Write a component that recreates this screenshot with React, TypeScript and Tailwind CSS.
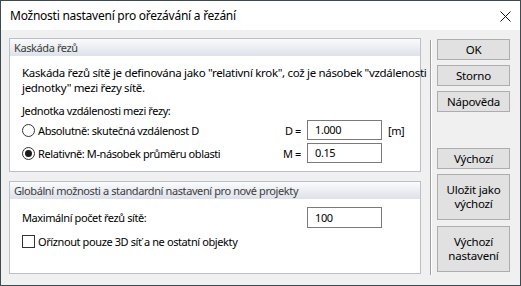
const font = { fontFamily: '"Noto Sans", "DejaVu Sans", sans-serif' };

function GroupBox({ title, className, children }: { title: string; className: string; children: React.ReactNode }) {
  return (
    <div className={`flex flex-col border border-[#b9c0cc] bg-white ${className}`}>
      <div className="h-[17px] bg-gradient-to-b from-[#fbfbfc] to-[#dde1ea] pl-[4px] leading-[17px] text-[#3c3c3c]">
        {title}
      </div>
      {children}
    </div>
  );
}

function Radio({ checked, label }: { checked?: boolean; label: string }) {
  return (
    <div className="flex items-center gap-[3px]">
      <span className="flex h-[13px] w-[13px] items-center justify-center rounded-full border border-[#333333] bg-white">
        {checked && <span className="h-[7px] w-[7px] rounded-full bg-[#1a1a1a]" />}
      </span>
      <span>{label}</span>
    </div>
  );
}

function Field({ value, className = "" }: { value: string; className?: string }) {
  return (
    <div className={`h-[20px] w-[75px] border border-[#7a7a7a] bg-white pl-[7px] leading-[18px] ${className}`}>
      {value}
    </div>
  );
}

function Btn({ children, className = "h-[21px]" }: { children: React.ReactNode; className?: string }) {
  return (
    <div className={`flex w-[73px] items-center justify-center border border-[#adadad] bg-[#e1e1e1] text-center text-[11.5px] leading-[14px] tracking-[-0.2px] text-black ${className}`}>
      {children}
    </div>
  );
}

export default function App() {
  return (
    <div style={font} className="flex h-[286px] w-[521px] flex-col border border-[#3b4a53] bg-[#f0f0f0] text-[11px] tracking-[-0.4px] text-black">
      <div className="flex h-[29px] items-center justify-between bg-white pl-[9px] pr-[9px]">
        <span className="text-[12px] tracking-[-0.25px]">Možnosti nastavení pro ořezávání a řezání</span>
        <svg width="11" height="11" viewBox="0 0 11 11" className="mt-[1px]">
          <path d="M0.5 0.5 L10.5 10.5 M10.5 0.5 L0.5 10.5" stroke="#111" strokeWidth="1" />
        </svg>
      </div>
      <div className="flex flex-1 pl-[8px]">
        <div className="flex flex-col gap-[9px] pt-[8px]">
          <GroupBox title="Kaskáda řezů" className="h-[134px] w-[412px]">
            <div className="flex flex-col pl-[12px] pt-[9px] leading-[15px]">
              <p className="whitespace-nowrap text-[11.5px] tracking-[-0.32px]">
                Kaskáda řezů sítě je definována jako "relativní krok", což je násobek "vzdálenosti
                <br />
                jednotky" mezi řezy sítě.
              </p>
              <p className="mt-[8px]">Jednotka vzdálenosti mezi řezy:</p>
              <div className="mt-[2px] flex h-[20px] items-center">
                <div className="w-[255px]">
                  <Radio label="Absolutně: skutečná vzdálenost D" />
                </div>
                <span className="w-[24px] text-right">D =</span>
                <Field value="1.000" className="ml-[6px]" />
                <span className="ml-[6px]">[m]</span>
              </div>
              <div className="mt-[3px] flex h-[20px] items-center">
                <div className="w-[255px]">
                  <Radio checked label="Relativně: M-násobek průměru oblasti" />
                </div>
                <span className="w-[24px] text-right">M =</span>
                <Field value="0.15" className="ml-[6px]" />
              </div>
            </div>
          </GroupBox>
          <GroupBox title="Globální možnosti a standardní nastavení pro nové projekty" className="h-[93px] w-[412px]">
            <div className="flex flex-col pl-[12px] pt-[8px] leading-[15px]">
              <div className="flex h-[21px] items-center">
                <span className="w-[285px]">Maximální počet řezů sítě:</span>
                <Field value="100" className="h-[21px] leading-[19px]" />
              </div>
              <div className="mt-[6px] flex items-center gap-[3px]">
                <span className="h-[13px] w-[13px] border border-[#333333] bg-white" />
                <span>Oříznout pouze 3D síť a ne ostatní objekty</span>
              </div>
            </div>
          </GroupBox>
        </div>
        <div className="ml-[9px] mt-[10px] mb-[10px] w-[2px] border-l border-[#a0a0a0] bg-white" />
        <div className="ml-[5px] flex flex-col pt-[9px]">
          <Btn>OK</Btn>
          <div className="mt-[5px]"><Btn>Storno</Btn></div>
          <div className="mt-[5px]"><Btn>Nápověda</Btn></div>
          <div className="mt-[36px]"><Btn>Výchozí</Btn></div>
          <div className="mt-[5px]"><Btn className="h-[46px]">Uložit jako<br />výchozí</Btn></div>
          <div className="mt-[6px]"><Btn className="h-[46px]">Výchozí<br />nastavení</Btn></div>
        </div>
      </div>
    </div>
  );
}
